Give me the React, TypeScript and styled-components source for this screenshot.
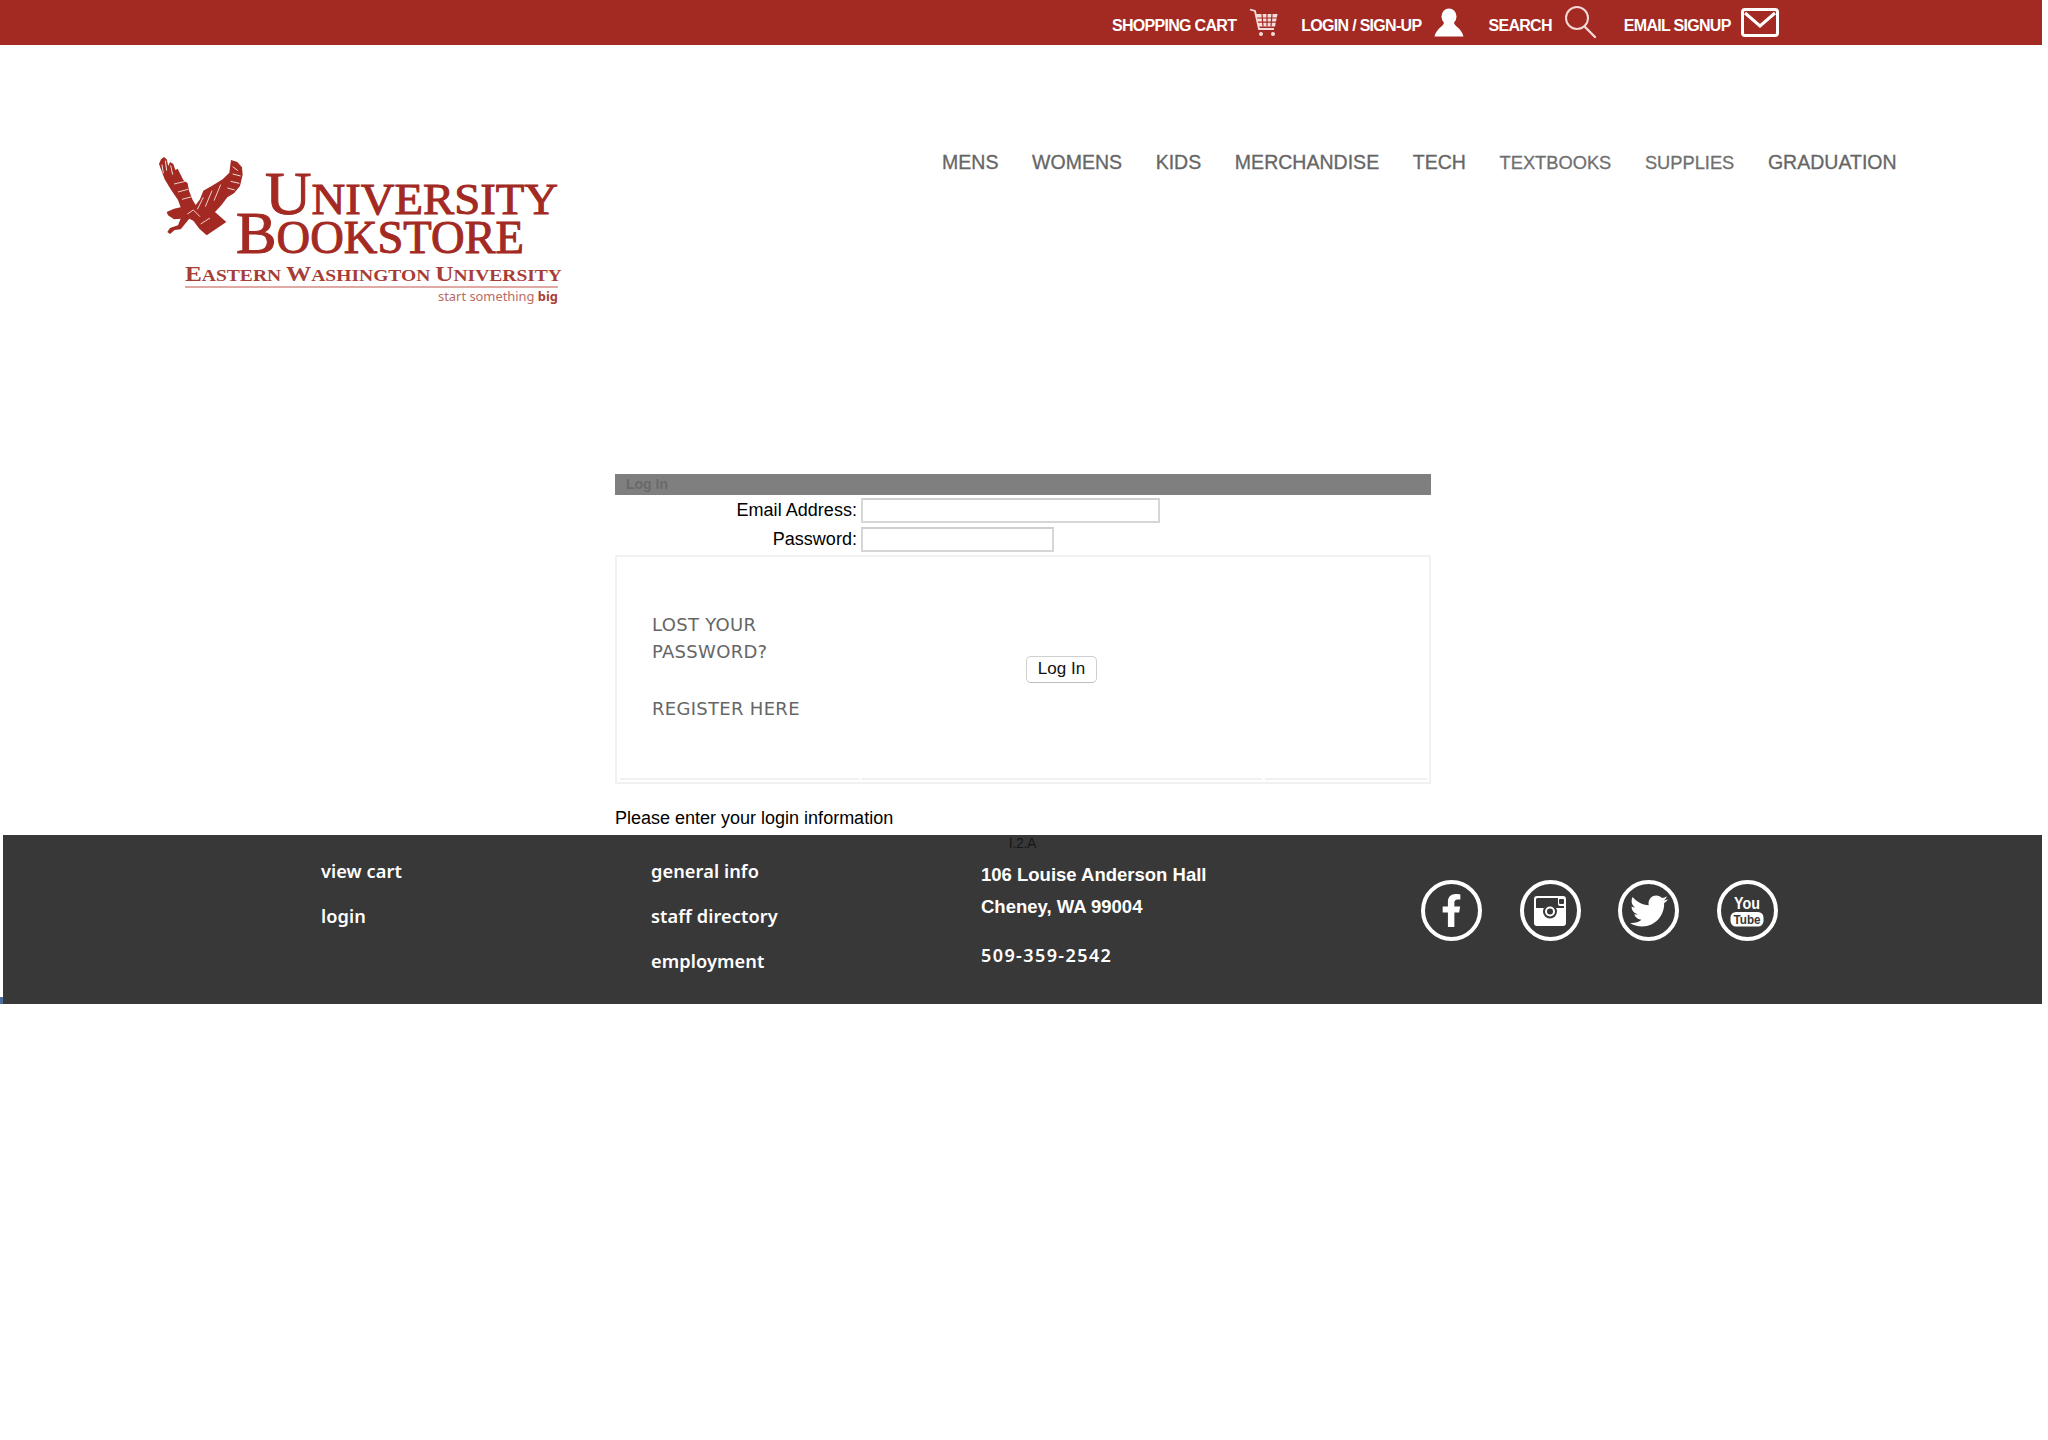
import React from "react";
import styled, { createGlobalStyle } from "styled-components";
import { FaFacebookF, FaTwitter } from "react-icons/fa";

const Global = createGlobalStyle`
  html, body { margin: 0; padding: 0; background: #fff; }
  body { font-family: "Liberation Sans", Arial, sans-serif; color: #000; }
  a { text-decoration: none; color: inherit; }
`;

const Page = styled.div`
  width: 2042px;
  min-height: 1440px;
  background: #fff;
`;

const TopBar = styled.header`
  height: 45px;
  background: #a32a23;
  display: flex;
  align-items: center;
  padding-left: 1112px;
  box-sizing: border-box;
`;

const TopLink = styled.a<{ $after: number; $gap?: number }>`
  display: flex;
  align-items: center;
  gap: ${(p) => p.$gap ?? 13}px;
  margin-right: ${(p) => p.$after}px;
  color: #fff;
  font-size: 16px;
  font-weight: 700;
  letter-spacing: -0.7px;
  white-space: nowrap;
  padding-top: 7px;
  height: 38px;
  box-sizing: border-box;
  svg { display: block; margin-top: -7px; }
  span { margin-top: -1px; }
`;

const Masthead = styled.div`
  display: flex;
  align-items: flex-start;
  padding: 95px 0 0 140px;
`;

const LogoArt = styled.svg`
  display: block;
  width: 440px;
  height: 180px;
  flex: none;
`;

const MainNav = styled.nav`
  display: flex;
  align-items: baseline;
  gap: 33.6px;
  margin: 10px 0 0 362px;
`;

const NavLink = styled.a<{ $light?: boolean }>`
  font-size: ${(p) => (p.$light ? 18.3 : 19.5)}px;
  line-height: 24px;
  color: ${(p) => (p.$light ? "#6f6f6f" : "#666")};
  letter-spacing: ${(p) => (p.$light ? "0" : "0.02px")};
  white-space: nowrap;
  -webkit-text-stroke: 0.3px currentColor;
`;

const LoginPanel = styled.section`
  width: 816px;
  margin: 154px 0 0 615px;
`;

const PanelTitle = styled.div`
  height: 21px;
  background: #7f7f7f;
  color: #6a6a6a;
  font-size: 14px;
  font-weight: 700;
  line-height: 21px;
  padding-left: 11px;
`;

const Fields = styled.div`
  display: grid;
  grid-template-columns: 242px auto;
  justify-content: start;
  align-items: center;
  column-gap: 4px;
  row-gap: 4px;
  padding: 3px 0;
`;

const FieldLabel = styled.label`
  text-align: right;
  font-size: 18px;
  line-height: 24px;
  padding-bottom: 1px;
  letter-spacing: 0.03px;
`;

const TextInput = styled.input<{ $w: number }>`
  display: block;
  width: ${(p) => p.$w}px;
  height: 25px;
  box-sizing: border-box;
  border: 2px solid #d6d6d6;
  border-top-color: #cfcfcf;
  background: #fff;
  padding: 0 4px;
  outline: none;
`;

const FormBox = styled.div`
  height: 229px;
  box-sizing: border-box;
  border: 2px solid #f1f1f1;
  padding: 2px 2px 2px 3px;
  display: grid;
  grid-template-columns: 239px 400px 162px;
  grid-template-rows: 1fr 2px;
  column-gap: 3px;
`;

const LinksCell = styled.div`
  padding: 0 0 5px 32px;
  align-self: center;
  font-family: "DejaVu Sans", sans-serif;
  font-size: 18px;
  letter-spacing: 0.3px;
  line-height: 27px;
  color: #666;
  white-space: nowrap;
`;

const LinkLine = styled.a<{ $top?: number }>`
  display: block;
  margin-top: ${(p) => p.$top ?? 0}px;
`;

const ButtonCell = styled.div`
  display: flex;
  align-items: center;
  justify-content: center;
  padding: 1px 1px 0 0;
`;

const SubmitButton = styled.button`
  width: 71px;
  height: 27px;
  box-sizing: border-box;
  background: #fff;
  border: 1px solid #cfcfcf;
  border-bottom-color: #bdbdbd;
  border-radius: 5px;
  font-family: "Liberation Sans", Arial, sans-serif;
  font-size: 17px;
  color: #111;
  padding: 0;
`;

const CellRule = styled.div`
  background: #f1f1f1;
`;

const HelpText = styled.p`
  margin: 22px 0 5px;
  font-size: 18px;
  line-height: 24px;
`;

const Footer = styled.footer`
  position: relative;
  margin-left: 3px;
  height: 169px;
  background: #383838;
  color: #fff;
  display: grid;
  grid-template-columns: 330px 330px 440px auto;
  justify-content: start;
  padding-left: 318px;
  box-sizing: border-box;
  &::before {
    content: "";
    position: absolute;
    left: -3px;
    bottom: 0;
    width: 3px;
    height: 7px;
    background: #4d6d9c;
  }
`;

const BuildTag = styled.div`
  position: absolute;
  left: 0;
  right: 0;
  top: 0;
  text-align: center;
  font-size: 14px;
  line-height: 17px;
  letter-spacing: -0.3px;
  color: #161616;
`;

const FootLinks = styled.div`
  padding-top: 14px;
  font-family: "Noto Sans", sans-serif;
  font-size: 18.2px;
  font-weight: 600;
  letter-spacing: 0.08px;
  line-height: 45px;
  a { display: block; white-space: nowrap; }
`;

const Address = styled.address`
  padding-top: 24px;
  font-style: normal;
  font-size: 18.5px;
  font-weight: 700;
  line-height: 32px;
`;

const Phone = styled.div`
  margin-top: 16px;
  font-family: "Noto Sans", sans-serif;
  font-weight: 600;
  letter-spacing: 1.4px;
  font-size: 18px;
`;

const SocialRow = styled.div`
  display: flex;
  gap: 37.5px;
  padding-top: 45px;
`;

const SocialLink = styled.a`
  width: 61px;
  height: 61px;
  box-sizing: border-box;
  border: 4px solid #fff;
  border-radius: 50%;
  display: flex;
  align-items: center;
  justify-content: center;
  color: #fff;
  svg { display: block; }
`;

const Cart = () => (
  <svg width="30" height="29" viewBox="0 0 30 29" fill="none">
    <path d="M1 1.5 L6 3 L10 21 H25" stroke="#f6dcda" strokeWidth="1.8" />
    <path d="M6.5 6 H28.5 L26 18.5 H9.5 Z" fill="#f6dcda" />
    <path d="M8 10 H28 M9 14.2 H27 M13 6 L14 18.5 M18 6 V18.5 M23 6 L22 18.5" stroke="#a32a23" strokeWidth="1.2" />
    <circle cx="12" cy="26" r="2" fill="#f6dcda" />
    <circle cx="24" cy="26" r="2" fill="#f6dcda" />
  </svg>
);

const UserIcon = () => (
  <svg width="30" height="29" viewBox="0 0 30 29">
    <ellipse cx="15" cy="8.5" rx="7.5" ry="8" fill="#fff" />
    <path d="M10 14 C10 19 3 19 0.5 28.5 H29.5 C27 19 20 19 20 14 Z" fill="#fff" />
  </svg>
);

const SearchIcon = () => (
  <svg width="32" height="33" viewBox="0 0 32 33" fill="none" stroke="#f3d8d5" strokeWidth="2">
    <circle cx="12" cy="12" r="11" />
    <path d="M20 21 L30 31" strokeLinecap="round" strokeWidth="2.4" />
  </svg>
);

const MailIcon = () => (
  <svg width="38" height="29" viewBox="0 0 38 29" fill="none" stroke="#fff" strokeWidth="3">
    <rect x="1.5" y="1.5" width="35" height="26" rx="2.5" />
    <path d="M4 5 L19 18 L34 5" />
  </svg>
);

const Logo = () => (
  <LogoArt viewBox="0 0 440 180" role="img" aria-label="University Bookstore">
    <g transform="translate(10 10) scale(.3333)" fill="#a32a23">
      <path d="M27 42 L33 28 L42 21 L50 28 L55 48 L60 36 L70 42 L76 60 L83 56 L92 74 L100 90 L113 100 L117 122 L128 150 L137 165 L150 148 L160 122 L190 105 L218 88 L238 68 L243 30 L262 36 L276 52 L278 74 L270 108 L252 130 L232 142 L214 166 L195 186 L229 216 L170 256 L148 236 L130 212 L118 206 L105 222 L92 238 L74 240 L60 252 L52 246 L60 234 L84 226 L92 206 L72 208 L54 196 L50 186 L72 176 L92 172 L84 150 L62 118 L44 88 Z" />
      <path d="M72 102 L106 94 M84 126 L114 118 M96 148 L126 140 M142 178 L160 142 M166 170 L186 122 M192 152 L212 104 M112 192 L130 180 L150 200 M152 222 L180 204" stroke="#f1d0cd" strokeWidth="3" fill="none" />
      <path d="M248 50 L264 62 M248 72 L272 78 M242 94 L268 100 M232 114 L254 120 M46 32 L50 62 M62 46 L68 74 M36 44 L40 70" stroke="#fff" strokeWidth="2.5" fill="none" />
    </g>
    <g fill="#a32a23" stroke="#a32a23" strokeWidth="1" fontFamily="'Liberation Serif', serif">
      <text x="125" y="74" textLength="293" lengthAdjust="spacingAndGlyphs" fontSize="45">
        <tspan fontSize="62">U</tspan>NIVERSITY
      </text>
      <text x="96" y="113" textLength="288" lengthAdjust="spacingAndGlyphs" fontSize="46">
        <tspan fontSize="60">B</tspan>OOKSTORE
      </text>
    </g>
    <text x="45" y="141" textLength="377" lengthAdjust="spacingAndGlyphs" fontSize="17" fontWeight="700" fill="#a83d36" fontFamily="'Liberation Serif', serif">
      <tspan fontSize="22">E</tspan>ASTERN <tspan fontSize="22">W</tspan>ASHINGTON <tspan fontSize="22">U</tspan>NIVERSITY
    </text>
    <rect x="45" y="146" width="373" height="2" fill="#dfa9a5" />
    <text x="298" y="161" textLength="120" lengthAdjust="spacingAndGlyphs" fontSize="13" fill="#bb6a64" fontFamily="'Noto Sans', sans-serif">
      start something <tspan fontWeight="700" fill="#a83d36">big</tspan>
    </text>
  </LogoArt>
);

const InstagramIcon = () => (
  <svg width="32" height="30" viewBox="0 0 32 30">
    <path fillRule="evenodd" fill="#fff" d="M3 0 H29 A3 3 0 0 1 32 3 V27 A3 3 0 0 1 29 30 H3 A3 3 0 0 1 0 27 V3 A3 3 0 0 1 3 0 Z M2 10 V3.5 A1.5 1.5 0 0 1 3.5 2 H24 V8 A2 2 0 0 0 26 10 H30 V12 H22 A8.5 8.5 0 0 0 10 12 H2 Z" />
    <circle cx="16" cy="15.5" r="7" fill="#383838" />
    <circle cx="16" cy="15.5" r="5" fill="#fff" />
    <circle cx="16" cy="15.5" r="3" fill="#383838" />
    <rect x="25" y="3" width="5" height="5" rx="1" fill="#383838" />
  </svg>
);

const YouTubeIcon = () => (
  <svg width="34" height="34" viewBox="0 0 34 34">
    <text x="17" y="15" textAnchor="middle" fontSize="17" fontWeight="700" fill="#fff" fontFamily="'Liberation Sans', sans-serif" textLength="26" lengthAdjust="spacingAndGlyphs">You</text>
    <rect x="0.5" y="18" width="33" height="14.5" rx="5.5" fill="#fff" />
    <text x="17" y="30" textAnchor="middle" fontSize="13" fontWeight="700" fill="#383838" fontFamily="'Liberation Sans', sans-serif" textLength="27" lengthAdjust="spacingAndGlyphs">Tube</text>
  </svg>
);

const navItems: [string, boolean][] = [
  ["MENS", false],
  ["WOMENS", false],
  ["KIDS", false],
  ["MERCHANDISE", false],
  ["TECH", false],
  ["TEXTBOOKS", true],
  ["SUPPLIES", true],
  ["GRADUATION", false],
];

export default function App() {
  return (
    <Page>
      <Global />
      <TopBar>
        <TopLink href="#" $after={22}>
          <span>SHOPPING CART</span>
          <Cart />
        </TopLink>
        <TopLink href="#" $after={24}>
          <span>LOGIN / SIGN-UP</span>
          <UserIcon />
        </TopLink>
        <TopLink href="#" $after={27}>
          <span>SEARCH</span>
          <SearchIcon />
        </TopLink>
        <TopLink href="#" $after={0} $gap={10}>
          <span>EMAIL SIGNUP</span>
          <MailIcon />
        </TopLink>
      </TopBar>

      <Masthead>
        <Logo />
        <MainNav>
          {navItems.map(([label, light]) => (
            <NavLink href="#" key={label} $light={light}>
              {label}
            </NavLink>
          ))}
        </MainNav>
      </Masthead>

      <LoginPanel>
        <PanelTitle>Log In</PanelTitle>
        <Fields>
          <FieldLabel htmlFor="email">Email Address:</FieldLabel>
          <TextInput id="email" $w={299} />
          <FieldLabel htmlFor="password">Password:</FieldLabel>
          <TextInput id="password" type="password" $w={193} />
        </Fields>
        <FormBox>
          <LinksCell>
            <LinkLine href="#">LOST YOUR</LinkLine>
            <LinkLine href="#">PASSWORD?</LinkLine>
            <LinkLine href="#" $top={30}>
              REGISTER HERE
            </LinkLine>
          </LinksCell>
          <ButtonCell>
            <SubmitButton type="button">Log In</SubmitButton>
          </ButtonCell>
          <div />
          <CellRule />
          <CellRule />
          <CellRule />
        </FormBox>
        <HelpText>Please enter your login information</HelpText>
      </LoginPanel>

      <Footer>
        <BuildTag>I.2.A</BuildTag>
        <FootLinks>
          <a href="#">view cart</a>
          <a href="#">login</a>
        </FootLinks>
        <FootLinks>
          <a href="#">general info</a>
          <a href="#">staff directory</a>
          <a href="#">employment</a>
        </FootLinks>
        <Address>
          <div>106 Louise Anderson Hall</div>
          <div>Cheney, WA 99004</div>
          <Phone>509-359-2542</Phone>
        </Address>
        <SocialRow>
          <SocialLink href="#" aria-label="Facebook">
            <FaFacebookF size={33} />
          </SocialLink>
          <SocialLink href="#" aria-label="Instagram">
            <InstagramIcon />
          </SocialLink>
          <SocialLink href="#" aria-label="Twitter">
            <FaTwitter size={38} />
          </SocialLink>
          <SocialLink href="#" aria-label="YouTube">
            <YouTubeIcon />
          </SocialLink>
        </SocialRow>
      </Footer>
    </Page>
  );
}
